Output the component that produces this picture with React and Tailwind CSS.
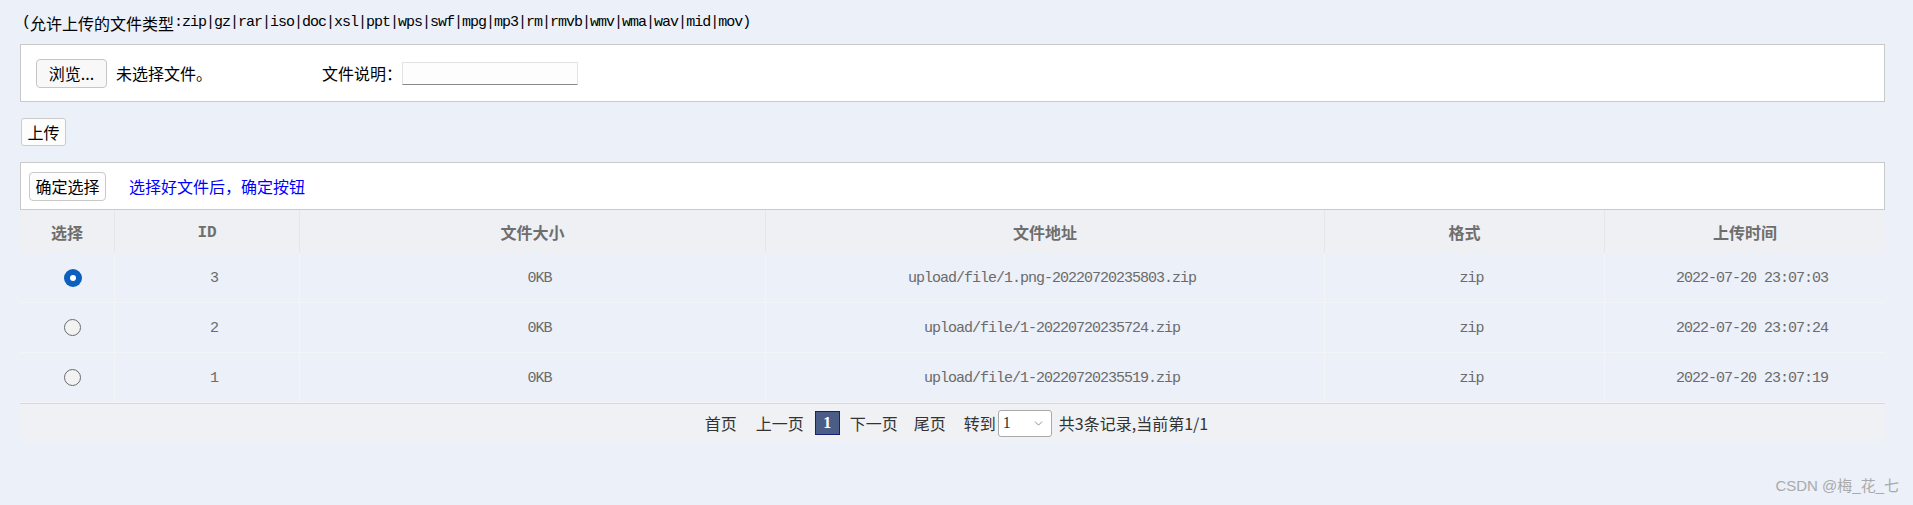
import { ChevronDown } from 'lucide-react';

const CJK = "font-['Noto_Sans_CJK_SC',sans-serif]";
const MONO = "font-['Liberation_Mono','Noto_Sans_CJK_SC',monospace] text-[15px] tracking-[-1px]";

const files = [
  { id: 3, size: '0KB', path: 'upload/file/1.png-20220720235803.zip', ext: 'zip', time: '2022-07-20 23:07:03', checked: true },
  { id: 2, size: '0KB', path: 'upload/file/1-20220720235724.zip', ext: 'zip', time: '2022-07-20 23:07:24', checked: false },
  { id: 1, size: '0KB', path: 'upload/file/1-20220720235519.zip', ext: 'zip', time: '2022-07-20 23:07:19', checked: false },
];

const Radio = ({ checked }) =>
  checked ? (
    <div className="w-[18px] h-[18px] rounded-full bg-[#0b5fbf] flex items-center justify-center">
      <div className="w-[6px] h-[6px] rounded-full bg-white" />
    </div>
  ) : (
    <div className="w-[17px] h-[17px] rounded-full border-[1.5px] border-[#6a6a6a] bg-[#f2f2f2]" />
  );

const HeadCell = ({ children, last, mono }) => (
  <div
    className={`flex items-center justify-center text-[#6e6e6e] font-bold ${
      mono ? "font-['Liberation_Mono',monospace] text-[16px] pt-[3px]" : `${CJK} text-[16px]`
    } ${last ? '' : 'border-r border-[#e4e6ea]'}`}
  >
    {children}
  </div>
);

const Cell = ({ children, last }) => (
  <div
    className={`flex items-center justify-center pl-[14px] pt-[3px] border-b border-[#f3f4f7] text-[#6b6b6b] ${MONO} ${
      last ? '' : 'border-r'
    }`}
  >
    {children}
  </div>
);

const App = () => {
  return (
    <div className="relative min-h-[505px] bg-[#ebf0f9] pt-[13px] text-black">
      {/* Allowed types */}
      <div className="pl-[22px] h-[20px] leading-[20px] flex items-center whitespace-nowrap">
        <span className={MONO}>(</span>
        <span className={`${CJK} text-[16px]`}>允许上传的文件类型</span>
        <span className={MONO}>:zip|gz|rar|iso|doc|xsl|ppt|wps|swf|mpg|mp3|rm|rmvb|wmv|wma|wav|mid|mov)</span>
      </div>

      <div className="ml-[20px] w-[1865px]">
        {/* File picker */}
        <div className="mt-[11px] h-[58px] bg-white border border-[#c9c9c9] flex items-center px-[15px]">
          <div className={`w-[286px] flex items-center ${CJK} text-[16px]`}>
            <button className="h-[29px] w-[71px] bg-[#f8f8f8] border border-[#c6c6c6] rounded-[4px] leading-none">
              浏览...
            </button>
            <span className="ml-[9px]">未选择文件。</span>
          </div>
          <span className={`${CJK} text-[16px]`}>文件说明：</span>
          <div className="w-[176px] h-[23px] bg-[#fdfdfd] border border-[#e3e3e3] border-b-[#8a8a8a]" />
        </div>

        {/* Upload */}
        <button
          className={`mt-[16px] ml-[1px] h-[28px] w-[45px] bg-[#fdfdfd] border border-[#cbcbcb] rounded-[3px] ${CJK} text-[16px] leading-none`}
        >
          上传
        </button>

        {/* Confirm */}
        <div className="mt-[16px] h-[48px] bg-white border border-[#c9c9c9] flex items-center pl-[8px]">
          <button
            className={`h-[29px] w-[77px] bg-[#fdfdfd] border border-[#c9c9c9] rounded-[4px] ${CJK} text-[16px] leading-none`}
          >
            确定选择
          </button>
          <span className={`ml-[23px] ${CJK} text-[16px] text-[#0000ff]`}>选择好文件后，确定按钮</span>
        </div>

        {/* Table */}
        <div className="grid grid-cols-[95px_185px_466px_559px_280px_280px] h-[43px] bg-[#eff0f3]">
          <HeadCell>选择</HeadCell>
          <HeadCell mono>ID</HeadCell>
          <HeadCell>文件大小</HeadCell>
          <HeadCell>文件地址</HeadCell>
          <HeadCell>格式</HeadCell>
          <HeadCell last>上传时间</HeadCell>
        </div>
        {files.map((f) => (
          <div
            key={f.id}
            className="grid grid-cols-[95px_185px_466px_559px_280px_280px] h-[50px] bg-[#ecf0f8] border-[#f3f4f7]"
          >
            <div className="flex items-center justify-center pl-[11px] border-r border-b border-[#f3f4f7]">
              <Radio checked={f.checked} />
            </div>
            <Cell>{f.id}</Cell>
            <Cell>{f.size}</Cell>
            <Cell>{f.path}</Cell>
            <Cell>{f.ext}</Cell>
            <Cell last>{f.time}</Cell>
          </div>
        ))}

        {/* Pager */}
        <div className={`h-[39px] border-t border-[#d9d9d9] bg-[#eff1f4] flex items-center justify-center pl-[8px] ${CJK} text-[16px] text-[#333]`}>
          <span>首页</span>
          <span className="ml-[19px]">上一页</span>
          <span className="ml-[11px] w-[25px] h-[24px] bg-[#4b5d86] border border-[#14207a] text-white font-bold flex items-center justify-center font-['Liberation_Serif',serif]">
            1
          </span>
          <span className="ml-[10px]">下一页</span>
          <span className="ml-[16px]">尾页</span>
          <span className="ml-[18px]">转到</span>
          <div className="ml-[2px] w-[54px] h-[27px] bg-white border border-[#a9a9a9] rounded-[3px] flex items-center justify-between pl-[4px] pr-[6px]">
            <span className="font-['Liberation_Serif',serif]">1</span>
            <ChevronDown size={13} strokeWidth={1.5} className="text-[#777]" />
          </div>
          <span className="ml-[7px]">共3条记录,当前第1/1</span>
        </div>
      </div>

      {/* Watermark */}
      <div className="absolute right-[14px] bottom-[9px] text-[15px] leading-[20px] text-[#aaaaaa] font-['Liberation_Sans','Noto_Sans_CJK_SC',sans-serif]">
        CSDN @梅_花_七
      </div>
    </div>
  );
};

export default App;
